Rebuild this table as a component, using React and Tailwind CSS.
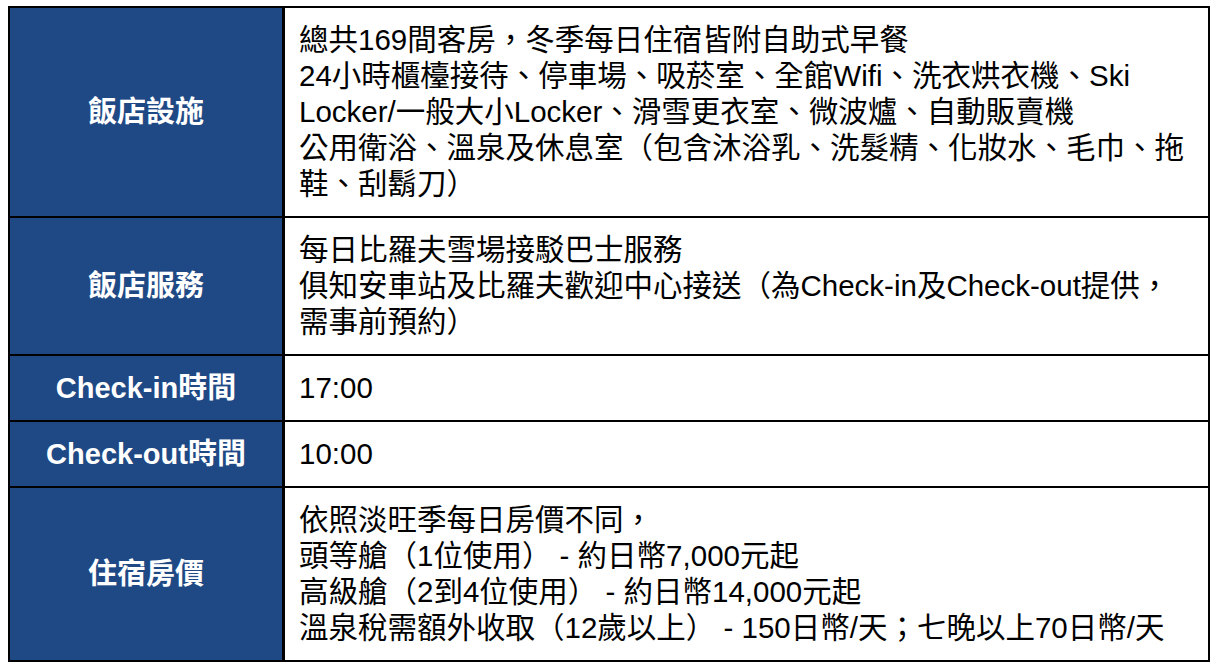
import React from 'react';

const rows = [
  {
    label: '飯店設施',
    lines: [
      '總共169間客房，冬季每日住宿皆附自助式早餐',
      '24小時櫃檯接待、停車場、吸菸室、全館Wifi、洗衣烘衣機、Ski',
      'Locker/一般大小Locker、滑雪更衣室、微波爐、自動販賣機',
      '公用衛浴、溫泉及休息室（包含沐浴乳、洗髮精、化妝水、毛巾、拖',
      '鞋、刮鬍刀）',
    ],
  },
  {
    label: '飯店服務',
    lines: [
      '每日比羅夫雪場接駁巴士服務',
      '俱知安車站及比羅夫歡迎中心接送（為Check-in及Check-out提供，',
      '需事前預約）',
    ],
  },
  { label: 'Check-in時間', lines: ['17:00'] },
  { label: 'Check-out時間', lines: ['10:00'] },
  {
    label: '住宿房價',
    lines: [
      '依照淡旺季每日房價不同，',
      '頭等艙（1位使用） - 約日幣7,000元起',
      '高級艙（2到4位使用） - 約日幣14,000元起',
      '溫泉稅需額外收取（12歲以上） - 150日幣/天；七晚以上70日幣/天',
    ],
  },
];

const App = () => {
  return (
    <div
      className="w-[1218px] h-[668px] bg-white pt-[6px] pl-[8px]"
      style={{ fontFamily: '"Liberation Sans", "Noto Sans CJK TC", sans-serif' }}
    >
      <div className="w-[1202px] border-2 border-black flex flex-col">
        {rows.map((row, i) => (
          <div key={i} className={`flex ${i > 0 ? 'border-t-2 border-black' : ''}`}>
            <div className="w-[275px] shrink-0 bg-[#1f4985] border-r-[3px] border-black flex items-center justify-center text-white font-bold text-[29px] leading-[36px]">
              {row.label}
            </div>
            <div className="flex-1 px-[14px] py-[14px] text-[29.5px] leading-[36px] text-black">
              {row.lines.map((line, j) => (
                <div key={j} className="whitespace-nowrap">{line}</div>
              ))}
            </div>
          </div>
        ))}
      </div>
    </div>
  );
};

export default App;
